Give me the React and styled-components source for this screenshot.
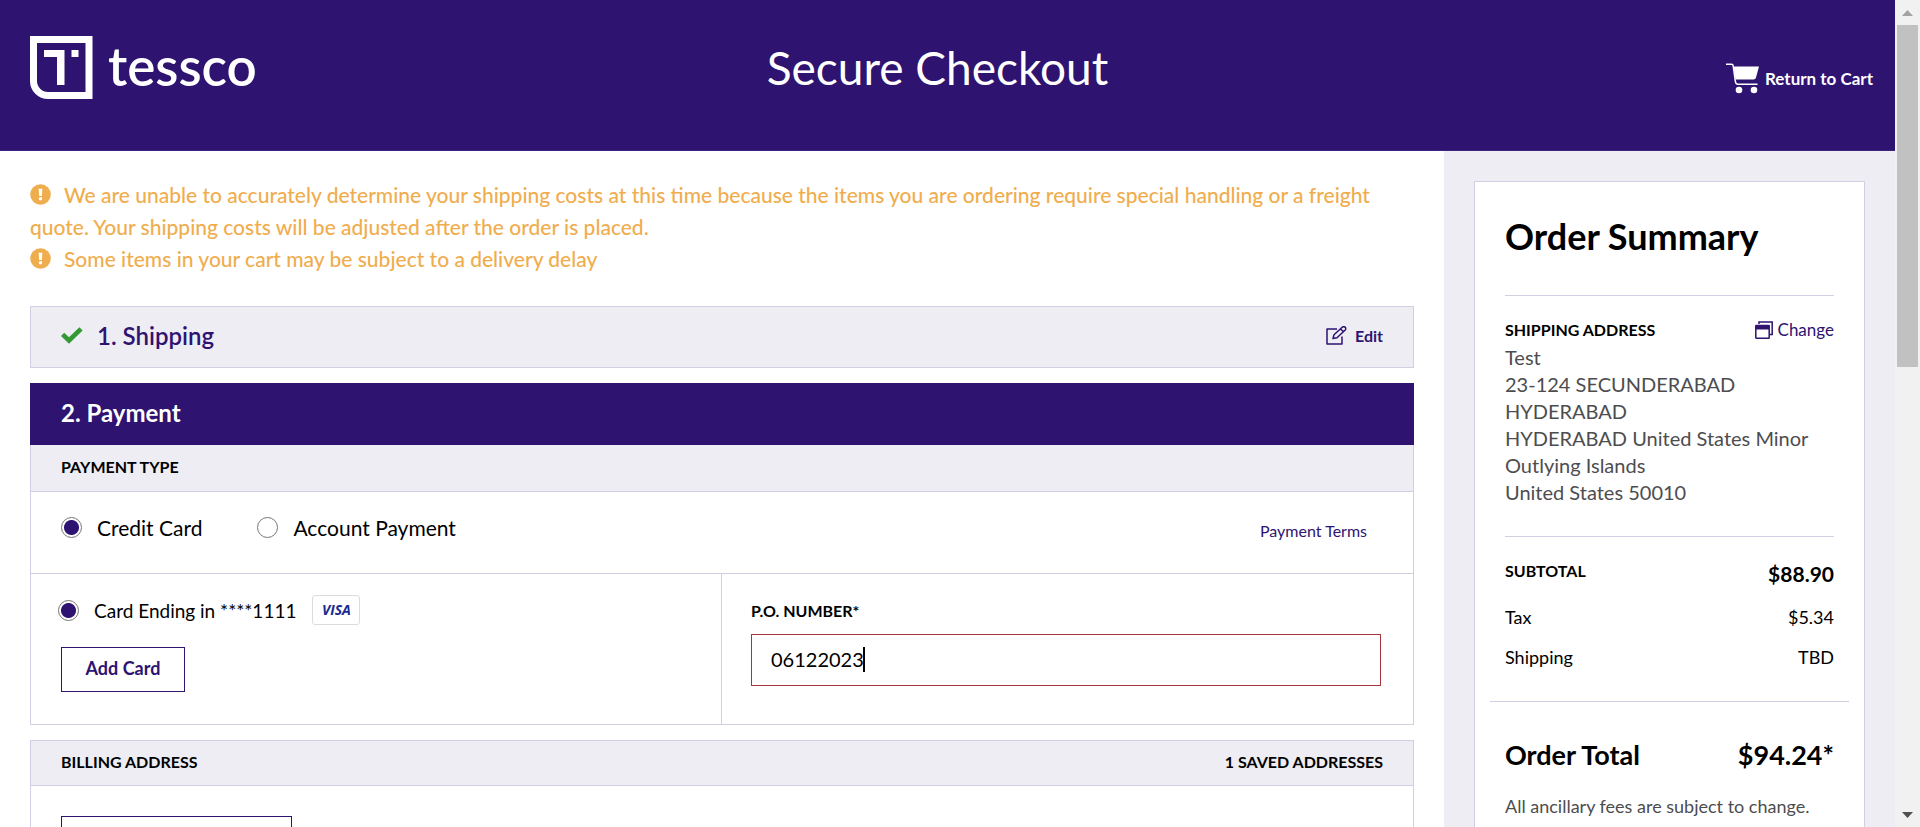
import React from "react";
import styled, { createGlobalStyle, ThemeProvider } from "styled-components";

const theme = {
  purple: "#2e1371",
  panel: "#eeedf4",
  line: "#d1cfe2",
  orange: "#f0ad4e",
  grey: "#4d4d4f",
  scrollWidth: 25,
};

const GlobalStyle = createGlobalStyle`
  *, *::before, *::after { box-sizing: border-box; }
  html { height: 100%; overflow: hidden; }
  body {
    height: 100%;
    margin: 0;
    overflow: hidden;
    background: #fff;
    color: #000;
    font-family: Lato, "Open Sans", sans-serif;
    font-size: 20px;
  }
  #root { height: 100%; }
  h1, h2, h3, p, dl, dd, address { margin: 0; }
  svg { display: block; flex: none; }
`;

const Window = styled.div`
  display: flex;
  height: 100%;
  overflow: hidden;
`;

const Page = styled.div`
  flex: 1;
  min-width: 0;
  display: flex;
  flex-direction: column;
`;

/* Header */

const Header = styled.header`
  display: grid;
  grid-template-columns: 1fr auto 1fr;
  align-items: start;
  flex: none;
  padding: 36px 22px 50px 30px;
  border-bottom: 1px solid #3d2280;
  background: ${(p) => p.theme.purple};
  color: #fff;
`;

const Brand = styled.a`
  display: flex;
  gap: 15px;
  color: inherit;
  text-decoration: none;
`;

const BrandName = styled.span`
  font-size: 53px;
  font-weight: 600;
  line-height: 60px;
`;

const PageTitle = styled.h1`
  margin-right: 28px;
  font-size: 46px;
  font-weight: 400;
  line-height: 64px;
`;

const CartLink = styled.a`
  display: flex;
  align-items: center;
  justify-self: end;
  gap: 6px;
  padding-top: 26px;
  color: inherit;
  font-size: 17px;
  font-weight: 700;
  line-height: 33px;
  text-decoration: none;
`;

/* Columns */

const Columns = styled.div`
  display: flex;
  flex: 1;
  min-height: 0;
`;

const Main = styled.main`
  flex: 1;
  min-width: 0;
  display: flex;
  flex-direction: column;
  padding: 28px 30px 0;
`;

const Notice = styled.p`
  color: ${(p) => p.theme.orange};
  font-size: 21px;
  font-weight: 500;
  line-height: 32px;

  svg {
    display: inline-block;
    margin-right: 13px;
    vertical-align: -2px;
  }
`;

const Notices = styled.div`
  margin-bottom: 31px;
`;

const StepBar = styled.section`
  display: flex;
  align-items: center;
  flex: none;
  min-height: 62px;
  padding: 0 30px 3px;
  border: 1px solid ${(p) => (p.$active ? p.theme.purple : p.theme.line)};
  background: ${(p) => (p.$active ? p.theme.purple : p.theme.panel)};
  color: ${(p) => (p.$active ? "#fff" : p.theme.purple)};
  margin-top: ${(p) => (p.$active ? "15px" : "0")};
`;

const StepTitle = styled.h2`
  font-size: 24px;
  font-weight: ${(p) => p.$weight};
  line-height: 30px;
`;

const CheckMark = styled.span`
  padding-right: 14px;
`;

const EditLink = styled.a`
  display: flex;
  align-items: center;
  gap: 8px;
  margin-left: auto;
  color: ${(p) => p.theme.purple};
  font-size: 16px;
  font-weight: 700;
  line-height: 20px;
  text-decoration: none;
`;

const Panel = styled.section`
  flex: none;
  border: 1px solid ${(p) => p.theme.line};
  border-top-width: ${(p) => (p.$attached ? 0 : "1px")};
  margin-top: ${(p) => (p.$attached ? 0 : "15px")};
`;

const PanelHead = styled.div`
  display: flex;
  align-items: center;
  justify-content: space-between;
  height: ${(p) => (p.$tall ? "47px" : "45px")};
  padding: 0 30px 2px;
  border-bottom: 1px solid ${(p) => p.theme.line};
  background: ${(p) => p.theme.panel};
`;

const Caption = styled.h3`
  font-size: 16px;
  font-weight: 700;
  line-height: 24px;
  text-transform: uppercase;
`;

const TypeRow = styled.div`
  display: flex;
  align-items: center;
  height: 82px;
  padding: 0 46px 10px 30px;
  border-bottom: 1px solid ${(p) => p.theme.line};
`;

const Choice = styled.label`
  display: flex;
  align-items: center;
  gap: 15px;
  margin-right: ${(p) => p.$gap || 0}px;
  font-size: ${(p) => p.$size || 21}px;
  line-height: 27px;
  white-space: nowrap;
`;

const Radio = styled.input`
  appearance: none;
  flex: none;
  width: 21px;
  height: 21px;
  margin: 0;
  border: 1px solid #767676;
  border-radius: 50%;
  background: #fff;

  &:checked {
    background: radial-gradient(circle, ${(p) => p.theme.purple} 7px, #fff 8px);
  }
`;

const TextLink = styled.a`
  margin-left: auto;
  padding-top: 6px;
  color: ${(p) => p.theme.purple};
  font-size: 16px;
  line-height: 20px;
  text-decoration: none;
`;

const Split = styled.div`
  display: grid;
  grid-template-columns: 1fr 1fr;
`;

const CardSide = styled.div`
  display: flex;
  flex-direction: column;
  align-items: flex-start;
  gap: 22px;
  padding: 21px 27px 32px;
  border-right: 1px solid ${(p) => p.theme.line};
`;

const CardLine = styled.div`
  display: flex;
  align-items: center;
`;

const Indent = styled.div`
  padding-left: 3px;
`;

const OutlineButton = styled.button`
  display: block;
  width: ${(p) => p.$width}px;
  height: 45px;
  padding: 0 0 3px;
  border: 1px solid ${(p) => p.theme.purple};
  background: #fff;
  color: ${(p) => p.theme.purple};
  font: 700 18px/24px Lato, sans-serif;
`;

const PoSide = styled.div`
  display: flex;
  flex-direction: column;
  gap: 11px;
  padding: 25px 32px 0 29px;
`;

const PoLabel = styled.label`
  font-size: 16px;
  font-weight: 700;
  line-height: 24px;
`;

const PoField = styled.div`
  position: relative;
`;

const PoInput = styled.input`
  display: block;
  width: 100%;
  height: 52px;
  padding: 0 19px 3px;
  border: 1px solid #a4353c;
  border-radius: 0;
  outline: none;
  background: #fff;
  color: #000;
  font: 400 20px/30px Lato, sans-serif;
`;

const Caret = styled.span`
  position: absolute;
  top: 13px;
  left: 112px;
  width: 2px;
  height: 25px;
  background: #000;
`;

const BillingBody = styled.div`
  padding: 30px;
`;

/* Order summary */

const Aside = styled.aside`
  flex: none;
  width: 451px;
  padding: 30px 30px 0;
  background: ${(p) => p.theme.panel};
`;

const Summary = styled.section`
  height: 100%;
  padding: 0 15px;
  border: 1px solid ${(p) => p.theme.line};
  border-bottom: 0;
  background: #fff;
`;

const Block = styled.div`
  margin: 0 15px;
  padding: ${(p) => p.$pad};
  border-bottom: ${(p) => (p.$rule ? `1px solid ${p.theme.line}` : 0)};
`;

const SummaryTitle = styled.h2`
  font-size: 36px;
  font-weight: 700;
  line-height: 48px;
`;

const Line = styled.div`
  display: flex;
  align-items: center;
  justify-content: space-between;
`;

const ChangeLink = styled.a`
  display: flex;
  align-items: center;
  gap: 5px;
  color: ${(p) => p.theme.purple};
  font-size: 17px;
  line-height: 24px;
  text-decoration: none;
`;

const Address = styled.address`
  margin-top: 2px;
  color: ${(p) => p.theme.grey};
  font-size: 20px;
  font-style: normal;
  line-height: 27px;
`;

const Costs = styled.dl`
  display: flex;
  flex-direction: column;
  gap: 10px;
  padding: 22px 15px 29px;
  border-bottom: 1px solid ${(p) => p.theme.line};
`;

const Cost = styled(Line)`
  font-size: 18px;
  line-height: 30px;
`;

const Subtotal = styled(Line)`
  padding-bottom: 3px;
  font-weight: 700;
`;

const SubtotalName = styled.dt`
  padding-bottom: 6px;
  font-size: 16px;
  line-height: 24px;
`;

const SubtotalValue = styled.dd`
  font-size: 21px;
  line-height: 30px;
`;

const Total = styled(Line)`
  font-size: 27px;
  font-weight: 700;
  line-height: 36px;
`;

const Note = styled.p`
  margin-top: 21px;
  color: ${(p) => p.theme.grey};
  font-size: 18px;
  line-height: 24px;
`;

/* Scroll bar */

const ScrollTrack = styled.div`
  display: flex;
  flex-direction: column;
  flex: none;
  align-items: center;
  width: ${(p) => p.theme.scrollWidth}px;
  background: #f1f1f1;
`;

const ScrollArrow = styled.div`
  display: flex;
  align-items: center;
  justify-content: center;
  height: 25px;
`;

const ScrollLane = styled.div`
  flex: 1;
  align-self: stretch;
  padding: 0 2px;
`;

const ScrollThumb = styled.div`
  height: 44%;
  background: #c1c1c1;
`;

/* Drawings */

const LogoMark = () => (
  <svg width="63" height="63" viewBox="0 0 63 63" fill="#fff" aria-hidden="true">
    <path
      fillRule="evenodd"
      d="M0 0H62.500V63H18A18 18 0 0 1 0 45ZM7 7V45A11 11 0 0 0 18 56H55.500V7Z"
    />
    <path d="M14 14H34.500V49H27V21H14ZM41.500 14H48.500V21H41.500Z" />
  </svg>
);

const CartIcon = () => (
  <svg width="33" height="31" viewBox="0 0 33 31" aria-hidden="true">
    <path d="M0 1.200H5.500Q7 1.200 7.200 3L9.300 18Q9.600 21.300 12 21.300H31.500" fill="none" stroke="#fff" strokeWidth="1.500" />
    <path d="M7.500 3.500H33L30 14.500Q29.500 16.500 27.500 16.500H9.500Z" fill="#fff" />
    <circle cx="13" cy="27" r="3.300" fill="#fff" />
    <circle cx="28" cy="27" r="3.300" fill="#fff" />
  </svg>
);

const AlertIcon = () => (
  <svg width="21" height="21" viewBox="0 0 21 21" aria-hidden="true">
    <circle cx="10.500" cy="10.500" r="10.300" fill="#f0ad4e" />
    <path d="M8.700 4.800H12.300L11.900 12H9.100Z" fill="#fff" />
    <circle cx="10.500" cy="14.800" r="1.700" fill="#fff" />
  </svg>
);

const TickIcon = () => (
  <svg width="22" height="17" viewBox="0 0 22 17" aria-hidden="true">
    <path d="M1.600 7.300L8 13.500L20 1.800" fill="none" stroke="#339933" strokeWidth="4.600" />
  </svg>
);

const EditIcon = () => (
  <svg
    width="21"
    height="19"
    viewBox="0 0 21 19"
    fill="none"
    stroke="#2e1371"
    strokeWidth="1.500"
    strokeLinejoin="round"
    aria-hidden="true"
  >
    <path d="M11 3H1V18H16V10.500" />
    <path d="M7 12.500L8 8.800L16.200 1.300A1.900 1.900 0 0 1 19.200 4L11 11.700Z" />
    <path d="M14.500 3L17.500 5.600" />
  </svg>
);

const WindowsIcon = () => (
  <svg width="18" height="18" viewBox="0 0 18 18" fill="none" stroke="#2e1371" strokeWidth="1.500" aria-hidden="true">
    <path d="M4 3V1H17.200V13.500H15" />
    <rect x="0.800" y="4.500" width="13.400" height="12.700" rx="0.500" />
    <path d="M0.800 4H14.200V8.500H0.800Z" fill="#2e1371" stroke="none" />
  </svg>
);

const VisaBadge = styled.span`
  display: flex;
  align-items: center;
  justify-content: center;
  width: 48px;
  height: 30px;
  border: 1px solid #dcdcdc;
  border-radius: 3px;
  background: #fff;
  color: #1a2a8f;
  font: italic 700 14px/20px "Open Sans", sans-serif;
`;

export default function App() {
  return (
    <ThemeProvider theme={theme}>
      <GlobalStyle />
      <Window>
        <Page>
          <Header>
            <Brand href="#home">
              <LogoMark />
              <BrandName>tessco</BrandName>
            </Brand>
            <PageTitle>Secure Checkout</PageTitle>
            <CartLink href="#cart">
              <CartIcon />
              Return to Cart
            </CartLink>
          </Header>

          <Columns>
            <Main>
              <Notices>
                <Notice>
                  <AlertIcon />
                  We are unable to accurately determine your shipping costs at this time because the items you are
                  ordering require special handling or a freight quote. Your shipping costs will be adjusted after the
                  order is placed.
                </Notice>
                <Notice>
                  <AlertIcon />
                  Some items in your cart may be subject to a delivery delay
                </Notice>
              </Notices>

              <StepBar>
                <CheckMark>
                  <TickIcon />
                </CheckMark>
                <StepTitle $weight={600}>1. Shipping</StepTitle>
                <EditLink href="#shipping">
                  <EditIcon />
                  Edit
                </EditLink>
              </StepBar>

              <StepBar $active>
                <StepTitle $weight={700}>2. Payment</StepTitle>
              </StepBar>
              <Panel $attached>
                <PanelHead $tall>
                  <Caption>Payment Type</Caption>
                </PanelHead>
                <TypeRow>
                  <Choice $gap={55}>
                    <Radio type="radio" name="type" defaultChecked />
                    Credit Card
                  </Choice>
                  <Choice>
                    <Radio type="radio" name="type" />
                    Account Payment
                  </Choice>
                  <TextLink href="#terms">Payment Terms</TextLink>
                </TypeRow>
                <Split>
                  <CardSide>
                    <CardLine>
                      <Choice $size={19} $gap={16}>
                        <Radio type="radio" name="card" defaultChecked />
                        Card Ending in ****1111
                      </Choice>
                      <VisaBadge>VISA</VisaBadge>
                    </CardLine>
                    <Indent>
                      <OutlineButton type="button" $width={124}>
                        Add Card
                      </OutlineButton>
                    </Indent>
                  </CardSide>
                  <PoSide>
                    <PoLabel htmlFor="po">P.O. NUMBER*</PoLabel>
                    <PoField>
                      <PoInput id="po" type="text" defaultValue="06122023" />
                      <Caret />
                    </PoField>
                  </PoSide>
                </Split>
              </Panel>

              <Panel>
                <PanelHead>
                  <Caption>Billing Address</Caption>
                  <Caption>1 Saved Addresses</Caption>
                </PanelHead>
                <BillingBody>
                  <OutlineButton type="button" $width={231} aria-label="Add address" />
                </BillingBody>
              </Panel>
            </Main>

            <Aside>
              <Summary>
                <Block $rule $pad="30px 0 35px">
                  <SummaryTitle>Order Summary</SummaryTitle>
                </Block>
                <Block $rule $pad="22px 0 30px">
                  <Line>
                    <Caption>Shipping Address</Caption>
                    <ChangeLink href="#address">
                      <WindowsIcon />
                      Change
                    </ChangeLink>
                  </Line>
                  <Address>
                    Test
                    <br />
                    23-124 SECUNDERABAD
                    <br />
                    HYDERABAD
                    <br />
                    HYDERABAD United States Minor Outlying Islands
                    <br />
                    United States 50010
                  </Address>
                </Block>
                <Costs>
                  <Subtotal>
                    <SubtotalName>SUBTOTAL</SubtotalName>
                    <SubtotalValue>$88.90</SubtotalValue>
                  </Subtotal>
                  <Cost>
                    <dt>Tax</dt>
                    <dd>$5.34</dd>
                  </Cost>
                  <Cost>
                    <dt>Shipping</dt>
                    <dd>TBD</dd>
                  </Cost>
                </Costs>
                <Block $pad="35px 0 0">
                  <Total>
                    <span>Order Total</span>
                    <span>$94.24*</span>
                  </Total>
                  <Note>All ancillary fees are subject to change.</Note>
                </Block>
              </Summary>
            </Aside>
          </Columns>
        </Page>

        <ScrollTrack aria-hidden="true">
          <ScrollArrow>
            <svg width="11" height="6" viewBox="0 0 11 6">
              <path d="M0 6L5.500 0L11 6Z" fill="#a3a3a3" />
            </svg>
          </ScrollArrow>
          <ScrollLane>
            <ScrollThumb />
          </ScrollLane>
          <ScrollArrow>
            <svg width="11" height="6" viewBox="0 0 11 6">
              <path d="M0 0L5.500 6L11 0Z" fill="#505050" />
            </svg>
          </ScrollArrow>
        </ScrollTrack>
      </Window>
    </ThemeProvider>
  );
}
